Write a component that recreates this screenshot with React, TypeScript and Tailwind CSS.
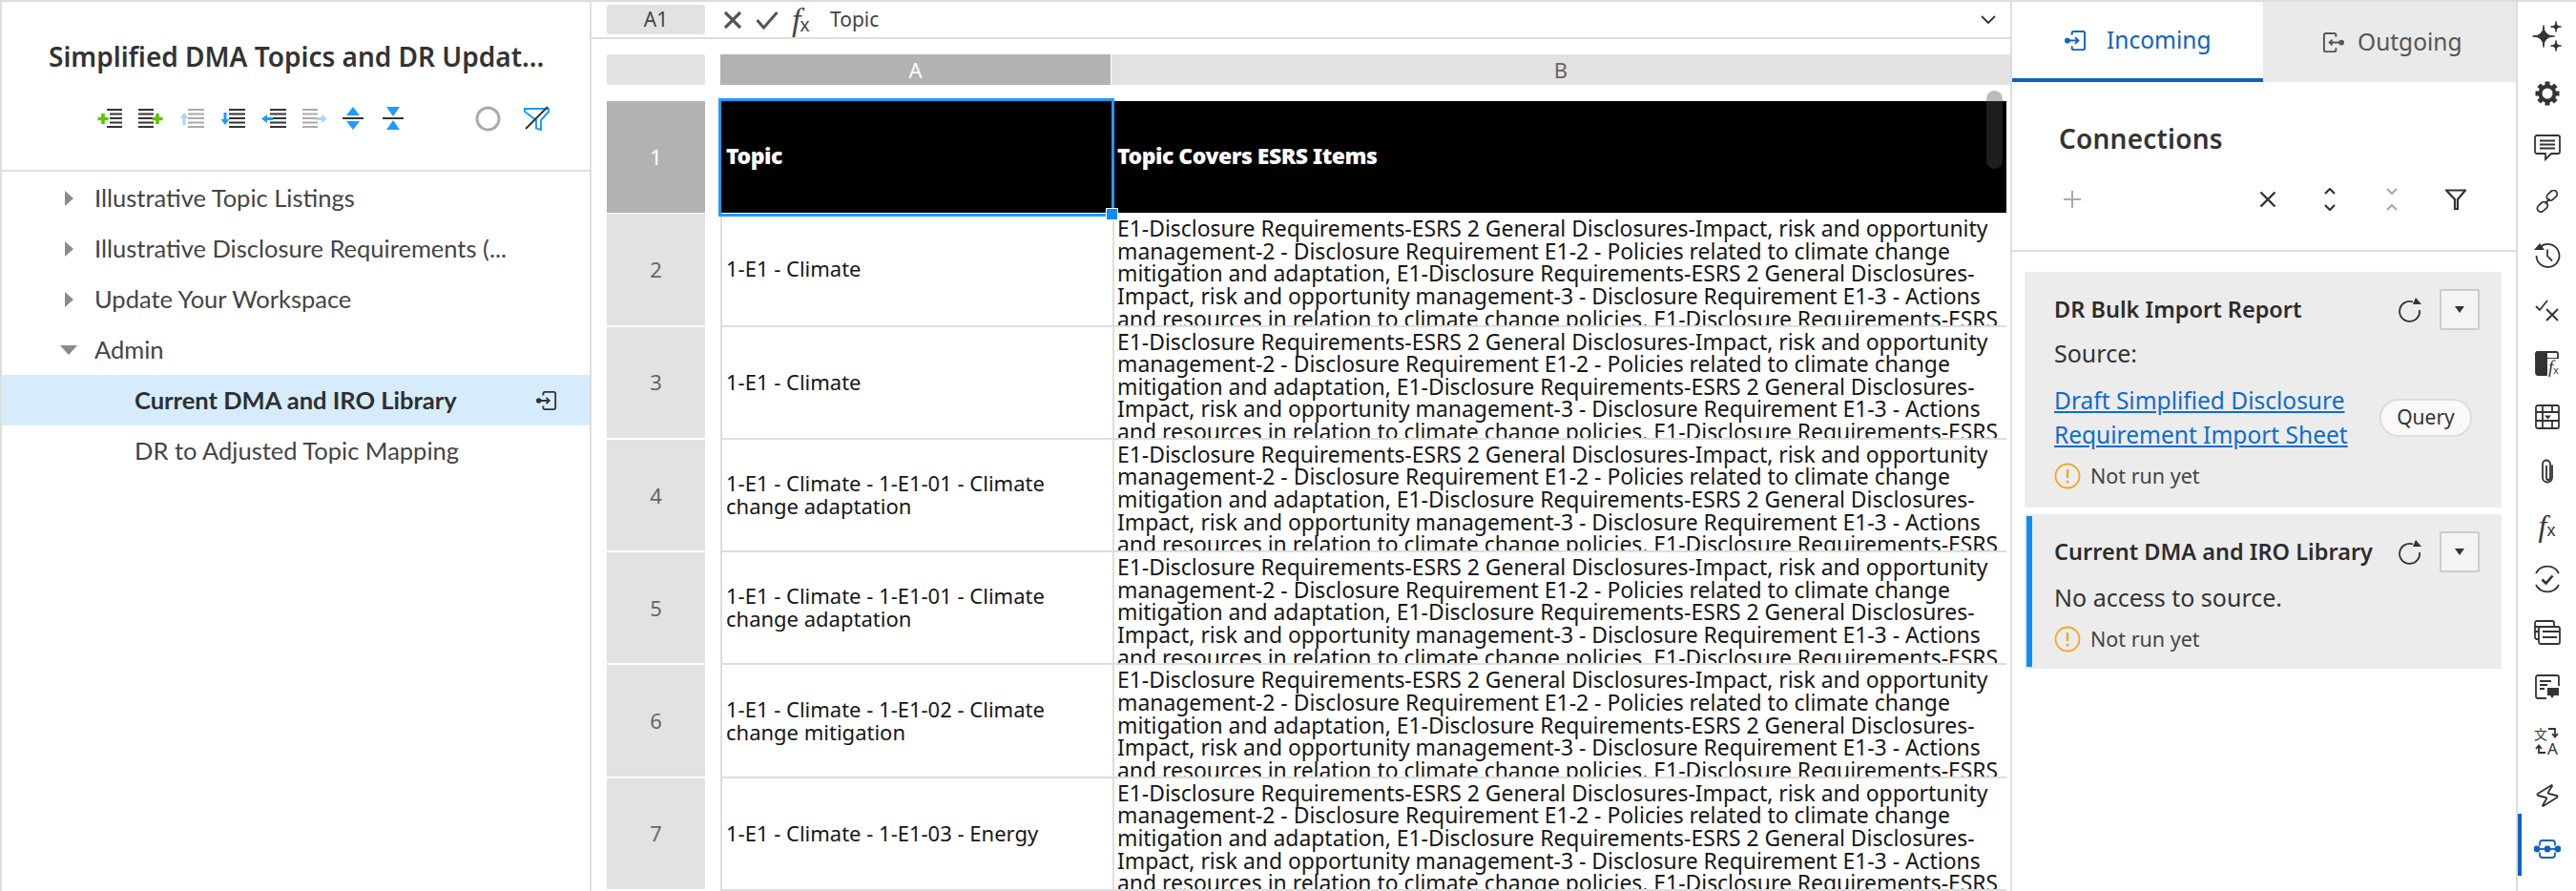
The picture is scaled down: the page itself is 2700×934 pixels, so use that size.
import React from "react";
import { Zap } from "lucide-react";

const PLEX = "font-['Noto_Sans',sans-serif]";

const longLines = [
  "E1-Disclosure Requirements-ESRS 2 General Disclosures-Impact, risk and opportunity",
  "management-2 - Disclosure Requirement E1-2 - Policies related to climate change",
  "mitigation and adaptation, E1-Disclosure Requirements-ESRS 2 General Disclosures-",
  "Impact, risk and opportunity management-3 - Disclosure Requirement E1-3 - Actions",
  "and resources in relation to climate change policies, E1-Disclosure Requirements-ESRS",
];

const rows = [
  { n: 2, a: ["1-E1 - Climate"] },
  { n: 3, a: ["1-E1 - Climate"] },
  { n: 4, a: ["1-E1 - Climate - 1-E1-01 - Climate", "change adaptation"] },
  { n: 5, a: ["1-E1 - Climate - 1-E1-01 - Climate", "change adaptation"] },
  { n: 6, a: ["1-E1 - Climate - 1-E1-02 - Climate", "change mitigation"] },
  { n: 7, a: ["1-E1 - Climate - 1-E1-03 - Energy"] },
];

const BLUE = "#1e9bff";
const GREEN = "#5cc400";

function Lines({ color, x, w, short = 0 }: { color: string; x: number; w: number; short?: number }) {
  return (
    <g fill={color}>
      {[1, 5.5, 10, 14.5, 19].map((y, i) => (
        <rect key={y} x={i === 0 || i === 4 ? x : x + short} y={y - 1} width={i === 0 || i === 4 ? w : w - short} height={2} />
      ))}
    </g>
  );
}

function Plus({ cx, cy }: { cx: number; cy: number }) {
  return <path d={`M${cx - 5.5} ${cy}H${cx + 5.5}M${cx} ${cy - 5.5}V${cy + 5.5}`} stroke={GREEN} strokeWidth="3.6" fill="none" />;
}

function ToolIcon({ children }: { children: React.ReactNode }) {
  return (
    <svg width="27" height="21" viewBox="0 0 27 21" className="shrink-0">
      {children}
    </svg>
  );
}

function TreeToolbar() {
  return (
    <div className="flex items-center ml-[100px] mt-[33px] h-[26px]">
      <div className="flex gap-[16px] items-center">
        <ToolIcon><Lines color="#333" x={10} w={16} short={3} /><Plus cx={6} cy={10.5} /></ToolIcon>
        <ToolIcon><Lines color="#333" x={0} w={16} /><Plus cx={20} cy={10.5} /></ToolIcon>
        <ToolIcon><Lines color="#aaa" x={9} w={17} /><path d="M5 4l4.5 6H6.5v7h-3v-7H.5z" fill="#a8d4fb" /></ToolIcon>
        <ToolIcon><Lines color="#333" x={9} w={17} /><path d="M5 17l4.5-6H6.5V4h-3v7H.5z" fill={BLUE} /></ToolIcon>
        <ToolIcon><Lines color="#333" x={9} w={17} /><path d="M0 10.5l6-4.5v3h6v3H6v3z" fill={BLUE} /></ToolIcon>
        <ToolIcon><Lines color="#aaa" x={0} w={16} /><path d="M26 10.5l-6-4.5v3h-6v3h6v3z" fill="#a8d4fb" /></ToolIcon>
      </div>
      <div className="flex gap-[20px] ml-[15px] items-center">
        <svg width="22" height="24" viewBox="0 0 22 24"><path d="M11 0l7 9H4zM11 24l-7-9h14z" fill={BLUE} /><rect y="11" width="22" height="2" fill="#333" /></svg>
        <svg width="22" height="24" viewBox="0 0 22 24"><path d="M11 10L4 0h14zM11 14l7 10H4z" fill={BLUE} /><rect y="11" width="22" height="2" fill="#333" /></svg>
      </div>
      <svg width="27" height="27" viewBox="0 0 27 27" className="ml-[75px]"><circle cx="13.5" cy="13.5" r="11.5" fill="none" stroke="#aaa" strokeWidth="3" /></svg>
      <svg width="27" height="27" viewBox="0 0 27 27" className="ml-[24px]">
        <path d="M1 3h25v3l-8 9v10l-5-1.5V15L1 6z" fill="none" stroke={BLUE} strokeWidth="2" />
        <path d="M2 24L25 1" stroke="#333" strokeWidth="2" />
      </svg>
    </div>
  );
}

function Caret({ open }: { open?: boolean }) {
  return (
    <svg width="20" height="20" viewBox="0 0 20 20" className="shrink-0">
      {open ? <path d="M1 5h18l-9 10z" fill="#8a8a8a" /> : <path d="M6 2l9 8-9 8z" fill="#8a8a8a" />}
    </svg>
  );
}

function InIcon({ size = 22, color = "#333" }: { size?: number; color?: string }) {
  return (
    <svg width={size} height={size} viewBox="0 0 24 24" fill="none" stroke={color} strokeWidth="2">
      <path d="M8 6V4a2 2 0 0 1 2-2h10a2 2 0 0 1 2 2v16a2 2 0 0 1-2 2H10a2 2 0 0 1-2-2v-2" />
      <path d="M2 12h13M11.5 8.5L15 12l-3.5 3.5" />
      <circle cx="3" cy="12" r="2" fill={color} />
    </svg>
  );
}

function OutIcon({ size = 22, color = "#555" }: { size?: number; color?: string }) {
  return (
    <svg width={size} height={size} viewBox="0 0 24 24" fill="none" stroke={color} strokeWidth="2">
      <path d="M15 6V4a2 2 0 0 0-2-2H4a2 2 0 0 0-2 2v16a2 2 0 0 0 2 2h9a2 2 0 0 0 2-2v-2" />
      <path d="M9 12h13M11 9l-3 3 3 3" />
      <circle cx="21" cy="12" r="2" fill={color} />
    </svg>
  );
}

function TreeRow({ label, open, child, selected }: { label: string; open?: boolean; child?: boolean; selected?: boolean }) {
  return (
    <div className={`flex items-center h-[53px] text-[25.5px] font-['Lato',sans-serif] ${selected ? "bg-[#d6ecfd] font-bold text-[#2f2f2f]" : "text-[#444]"}`}>
      {child ? <span className="w-[139px] shrink-0" /> : (
        <span className="w-[97px] shrink-0 flex pl-[60px]"><Caret open={open} /></span>
      )}
      <span className="truncate">{label}</span>
      {selected && <span className="ml-auto mr-[34px] flex"><InIcon size={22} color="#333" /></span>}
    </div>
  );
}

function LeftPanel() {
  return (
    <aside className="w-[620px] shrink-0 border-l-2 border-r-2 border-[#ddd]">
      <div className="h-[178px] border-b-2 border-[#ddd]">
        <h1 className={`${PLEX} pl-[49px] pt-[38px] text-[28px] leading-[38px] font-semibold text-[#333] whitespace-nowrap`}>
          Simplified DMA Topics and DR Updat...
        </h1>
        <TreeToolbar />
      </div>
      <div className="pt-[1px]">
        <TreeRow label="Illustrative Topic Listings" />
        <TreeRow label="Illustrative Disclosure Requirements (..." />
        <TreeRow label="Update Your Workspace" />
        <TreeRow label="Admin" open />
        <TreeRow label="Current DMA and IRO Library" child selected />
        <TreeRow label="DR to Adjusted Topic Mapping" child />
      </div>
    </aside>
  );
}

function Fx({ className = "" }: { className?: string }) {
  return (
    <span className={`flex items-end leading-none text-[#444] ${className}`}>
      <span className="font-['Liberation_Serif',serif] italic text-[34px] leading-[28px]">f</span>
      <span className="font-['Liberation_Sans',sans-serif] text-[20px] leading-[18px] -ml-[1px]">x</span>
    </span>
  );
}

function FormulaBar() {
  return (
    <div className={`${PLEX} h-[39px] border-b-2 border-[#ddd] flex items-center pl-[16px] pr-[15px] shrink-0`}>
      <div className="w-[103px] h-[31px] rounded-[3px] bg-[#e2e2e2] flex items-center justify-center text-[21px] text-[#444]">A1</div>
      <svg width="20" height="20" viewBox="0 0 20 20" className="ml-[19px]"><path d="M2 2l16 16M18 2L2 18" stroke="#555" strokeWidth="3.2" fill="none" /></svg>
      <svg width="24" height="20" viewBox="0 0 24 20" className="ml-[14px]"><path d="M1.5 10l7 8L22.5 2" stroke="#555" strokeWidth="3" fill="none" /></svg>
      <Fx className="ml-[14px] w-[25px]" />
      <span className="ml-[15px] text-[21px] text-[#444]">Topic</span>
      <svg width="16" height="10" viewBox="0 0 16 10" className="ml-auto"><path d="M1 1l7 7 7-7" stroke="#333" strokeWidth="1.8" fill="none" /></svg>
    </div>
  );
}

function Sheet() {
  return (
    <div className={`${PLEX} relative flex-1 overflow-hidden pt-[16px]`}>
      <div className="flex h-[32px] pl-[16px] text-[22px]">
        <div className="w-[103px] bg-[#e2e2e2] rounded-[2px]" />
        <div className="ml-[16px] w-[409px] bg-[#b2b2b2] text-white flex items-center justify-center">A</div>
        <div className="ml-[1px] flex-1 bg-[#e2e2e2] text-[#666] flex items-center justify-center">B</div>
      </div>
      <div className="mt-[17px] pl-[16px]">
        <div className="flex h-[118.3px]">
          <div className="w-[103px] mb-[1.5px] bg-[#b2b2b2] text-white text-[22px] flex items-center justify-center">1</div>
          <div className="ml-[16px] w-[411px] bg-black mb-[1.5px] text-white font-black text-[23px] flex items-center pl-[6px] pb-[3px] tracking-[-0.5px]">Topic</div>
          <div className="w-[937px] bg-black mb-[1.5px] text-white font-black text-[23px] flex items-center pl-[5px] pb-[3px] tracking-[-0.5px]">Topic Covers ESRS Items</div>
        </div>
        {rows.map((r) => (
          <div key={r.n} className="flex h-[118.3px]">
            <div className="w-[103px] mb-[2px] bg-[#e2e2e2] text-[#666] text-[22px] flex items-center justify-center">{r.n}</div>
            <div className="ml-[16px] w-[411px] border-l-2 border-b-2 border-[#ddd] flex flex-col justify-center pl-[4px] text-[22px] leading-[24px] text-[#161616] pb-[2px]">
              {r.a.map((t) => <div key={t} className="whitespace-nowrap">{t}</div>)}
            </div>
            <div className="w-[937px] border-l-2 border-b-2 border-[#ddd] pl-[3px] pt-[4px] overflow-hidden text-[22.9px] leading-[23.6px] text-[#161616]">
              {longLines.map((t) => <div key={t} className="whitespace-nowrap">{t}</div>)}
            </div>
          </div>
        ))}
      </div>
      {/* selected cell */}
      <div className="absolute left-[133px] top-[62px] w-[415px] h-[124px] border-[3px] border-[#1e9bff]" />
      <div className="absolute left-[539px] top-[177px] w-[13px] h-[13px] bg-[#0a8cff] border border-white" />
      {/* scroll thumb */}
      <div className="absolute left-[1462px] top-[54px] w-[17px] h-[82px] rounded-full bg-[rgba(78,78,78,0.385)]" />
    </div>
  );
}

function Refresh() {
  return (
    <svg width="26" height="26" viewBox="0 0 26 26" className="shrink-0" fill="none">
      <path d="M16 4.5A10.5 10.5 0 1 0 23 13" stroke="#333" strokeWidth="1.8" />
      <path d="M19 0l6 7h-9z" fill="#333" />
    </svg>
  );
}

function DropBtn() {
  return (
    <div className="w-[42px] h-[43px] shrink-0 ml-[18px] bg-[#f4f4f4] border-2 border-[#ccc] rounded-[2px] flex items-center justify-center">
      <svg width="12" height="7" viewBox="0 0 12 7"><path d="M1 0h10L6 7z" fill="#333" /></svg>
    </div>
  );
}

function Warn() {
  return (
    <svg width="28" height="28" viewBox="0 0 28 28" className="shrink-0" fill="none">
      <circle cx="14" cy="14" r="12.5" stroke="#f5a623" strokeWidth="1.8" />
      <path d="M14 7v9" stroke="#f5a623" strokeWidth="2.4" />
      <circle cx="14" cy="20" r="1.5" fill="#f5a623" />
    </svg>
  );
}

function NotRun({ className = "" }: { className?: string }) {
  return (
    <div className={`flex items-center gap-[10px] text-[21.5px] text-[#444] ${className}`}>
      <Warn />
      <span>Not run yet</span>
    </div>
  );
}

function ConnectionsPanel() {
  return (
    <section className={`${PLEX} w-[530px] shrink-0 border-l-2 border-[#ddd]`}>
      <div className="flex h-[84px] text-[24.5px]">
        <div className="w-[263px] border-b-[4px] border-[#0f62c0] text-[#0f62c0] flex items-center pl-[55px] gap-[21px]">
          <InIcon size={23} color="#0f62c0" />
          <span>Incoming</span>
        </div>
        <div className="flex-1 bg-[#e9ebeb] text-[#555] flex items-center pl-[62px] gap-[14px]">
          <OutIcon size={23} />
          <span>Outgoing</span>
        </div>
      </div>
      <div className="h-[178px] border-b-2 border-[#ddd]">
        <h2 className="pl-[49px] pt-[40px] text-[28px] leading-[38px] font-semibold text-[#333] tracking-[0.2px]">Connections</h2>
        <div className="flex items-center h-[28px] mt-[31px] pl-[53px]">
          <svg width="20" height="20" viewBox="0 0 20 20"><path d="M10 1v18M1 10h18" stroke="#aaa" strokeWidth="2" /></svg>
          <svg width="18" height="18" viewBox="0 0 18 18" className="ml-[186px]"><path d="M1.5 1.5l15 15M16.500 1.5l-15 15" stroke="#333" strokeWidth="2.4" /></svg>
          <svg width="12" height="24" viewBox="0 0 12 24" className="ml-[50px]" fill="none" stroke="#333" strokeWidth="2.2"><path d="M1 6l5-5 5 5M1 18l5 5 5-5" /></svg>
          <svg width="12" height="24" viewBox="0 0 12 24" className="ml-[53px]" fill="none" stroke="#aaa" strokeWidth="2.2"><path d="M1 1l5 5 5-5M1 23l5-5 5 5" /></svg>
          <svg width="22" height="22" viewBox="0 0 22 22" className="ml-[50px]" fill="none" stroke="#333" strokeWidth="2.2"><path d="M1 1.5h20L13 11v10h-3V11z" /></svg>
        </div>
      </div>
      <div className="mt-[21px] ml-[13px] w-[500px] h-[247px] bg-[#ececec] pl-[31px] pr-[23px] pt-[18px]">
        <div className="flex items-center h-[43px]">
          <span className="flex-1 text-[23.5px] font-semibold text-[#2c2c2c] whitespace-nowrap">DR Bulk Import Report</span>
          <Refresh />
          <DropBtn />
        </div>
        <div className="text-[25px] leading-[30px] mt-[9px] text-[#333]">Source:</div>
        <div className="flex items-center mt-[17px]">
          <a className="flex-1 text-[24.5px] leading-[36px] text-[#0f6bcf] underline">Draft Simplified Disclosure<br />Requirement Import Sheet</a>
          <div className="w-[97px] h-[40px] mr-[8px] rounded-full bg-[#f9f9f9] border-2 border-[#ddd] flex items-center justify-center text-[21px] text-[#333]">Query</div>
        </div>
        <NotRun className="mt-[9px]" />
      </div>
      <div className="mt-[7px] ml-[13px] w-[500px] h-[162px] bg-[#ececec] pl-[2px] py-[2px] flex">
        <div className="w-[6px] bg-[#0f8cf5] shrink-0" />
        <div className="flex-1 pl-[23px] pr-[23px] pt-[16px]">
          <div className="flex items-center h-[43px]">
            <span className="w-[337px] overflow-hidden whitespace-nowrap text-[23.5px] font-semibold text-[#2c2c2c]">Current DMA and IRO Library</span>
            <span className="ml-auto flex items-center"><Refresh /><DropBtn /></span>
          </div>
          <div className="text-[25px] leading-[30px] mt-[11px] text-[#333]">No access to source.</div>
          <NotRun className="mt-[13px]" />
        </div>
      </div>
    </section>
  );
}

const stroke = { fill: "none", stroke: "#333", strokeWidth: 1.8 };

function star(x: number, y: number, r: number) {
  return `M${x} ${y - r}Q${x} ${y} ${x + r} ${y}Q${x} ${y} ${x} ${y + r}Q${x} ${y} ${x - r} ${y}Q${x} ${y} ${x} ${y - r}Z`;
}

const railIcons: React.ReactNode[] = [
  <svg width="32" height="32" viewBox="0 0 32 32" className="-translate-y-[3px]"><path d={star(12, 16, 11.5)} fill="#333" stroke="#333" /><path d={star(25, 6, 5.5)} fill="#333" stroke="#333" /><path d={star(25, 26, 5.5)} fill="#333" stroke="#333" /></svg>,
  <svg width="28" height="28" viewBox="0 0 28 28">
    {[0, 45, 90, 135, 180, 225, 270, 315].map((a) => <rect key={a} x="11.5" y="1.5" width="5" height="6" fill="#333" transform={`rotate(${a} 14 14)`} />)}
    <circle cx="14" cy="14" r="7.5" fill="none" stroke="#333" strokeWidth="4" />
  </svg>,
  <svg width="30" height="30" viewBox="0 0 30 30" {...stroke}><path d="M4 3h22a2 2 0 0 1 2 2v15a2 2 0 0 1-2 2h-7l-6 6v-6H4a2 2 0 0 1-2-2V5a2 2 0 0 1 2-2z" /><path d="M7 8.5h16M7 12.5h16M7 16.5h16" /></svg>,
  <svg width="24" height="24" viewBox="0 0 24 24" {...stroke}><rect x="11" y="2" width="12" height="7.5" rx="3.7" transform="rotate(-42 17 6)" /><rect x="1" y="14" width="12" height="7.5" rx="3.7" transform="rotate(-42 7 18)" /><path d="M9.5 14.5l5-5" /></svg>,
  <svg width="28" height="28" viewBox="0 0 28 28" {...stroke}><path d="M6.5 5A12 12 0 1 1 2.5 14" /><path d="M14 7.5V14.5l5 5" /><path d="M0 8l6-7 5 7z" fill="#333" stroke="none" /></svg>,
  <svg width="26" height="26" viewBox="0 0 26 26" {...stroke}><path d="M1 10l4 4L13 4" /><path d="M12 13l12 12M24 13L12 25" strokeWidth="2" /></svg>,
  <span className="relative flex w-[25px] h-[26px]">
    <svg width="25" height="26" viewBox="0 0 25 26" {...stroke}><path d="M3 1h19a2 2 0 0 1 2 2v5H1V3a2 2 0 0 1 2-2z" /><path d="M12 1v24" /><path d="M3 1h9v24H3a2 2 0 0 1-2-2V3a2 2 0 0 1 2-2z" fill="#333" /></svg>
    <span className="absolute left-[13px] top-[8px] flex items-end font-['Liberation_Serif',serif] italic text-[19px] leading-[18px] text-[#333] bg-white pl-[1px]">f<span className="font-['Liberation_Sans',sans-serif] not-italic text-[11px] leading-[12px]">x</span></span>
  </span>,
  <svg width="26" height="26" viewBox="0 0 26 26" {...stroke}><rect x="1" y="1" width="24" height="24" rx="2" /><path d="M1 8h24M1 17h24M8 1v24M18 1v7M18 17v8" /><path d="M10 11.5h7l-3.5 4z" fill="#333" stroke="none" /></svg>,
  <svg width="28" height="28" viewBox="0 0 28 28" {...stroke}><path d="M19 7.5v13a5 5 0 0 1-10 0V6.5a4 4 0 0 1 8 0V21a2 2 0 0 1-4 0V8" /></svg>,
  <span className="flex items-end text-[#333]"><span className="font-['Liberation_Serif',serif] italic text-[32px] leading-[28px]">f</span><span className="font-['Liberation_Sans',sans-serif] text-[18px] leading-[17px]">x</span></span>,
  <svg width="30" height="30" viewBox="0 0 30 30" {...stroke}><path d="M3 9A13.5 13.5 0 0 1 27 9M27 21A13.5 13.5 0 0 1 3 21" /><path d="M9.5 15.5l4 4 7-8" strokeWidth="2.6" /></svg>,
  <svg width="30" height="28" viewBox="0 0 30 28" {...stroke}><path d="M6 20H4a2 2 0 0 1-2-2V3a2 2 0 0 1 2-2h16a2 2 0 0 1 2 2v3" /><rect x="6" y="7" width="22" height="18" rx="2" fill="#fff" /><path d="M2 7h14M2 12h4M10 12h18M10 18h15" /></svg>,
  <svg width="26" height="26" viewBox="0 0 26 26" {...stroke}><path d="M12 25H3a2 2 0 0 1-2-2V3a2 2 0 0 1 2-2h20a2 2 0 0 1 2 2v9" /><path d="M5 7h12M5 11h8M5 15h5" /><path d="M13 14h12v8h-5l-2 3-2-3h-3z" fill="#333" stroke="none" /></svg>,
  <svg width="28" height="30" viewBox="0 0 28 30">
    <text x="0" y="13" fontSize="14" fill="#333" fontFamily="'Noto Sans CJK SC',sans-serif">文</text>
    <text x="14" y="29" fontSize="17" fill="#333" fontFamily="'Noto Sans',sans-serif">A</text>
    <path d="M15 2h7v8M19 7l3 3.5 3-3.5" fill="none" stroke="#333" strokeWidth="1.8" />
    <path d="M12 27H5v-7M2 23l3-3.5 3 3.5" fill="none" stroke="#333" strokeWidth="1.8" />
  </svg>,
  <Zap size={28} strokeWidth={1.6} color="#333" className="rotate-[14deg]" />,
  <svg width="28" height="20" viewBox="0 0 28 20" fill="none" stroke="#0f62c0" strokeWidth="1.8"><path d="M2 10h24" /><path d="M6 6.5V4a3 3 0 0 1 3-3h10a3 3 0 0 1 3 3v2.5M6 13.5V16a3 3 0 0 0 3 3h10a3 3 0 0 0 3-3v-2.5" /><circle cx="3" cy="10" r="2.5" fill="#0f62c0" /><circle cx="14" cy="10" r="2.5" fill="#0f62c0" /><circle cx="25" cy="10" r="2.5" fill="#0f62c0" /></svg>,
];

function Rail() {
  return (
    <nav className="w-[63px] shrink-0 border-l-2 border-[#ddd] pt-[11px] relative">
      {railIcons.map((icon, i) => (
        <div key={i} className="h-[56.6px] flex items-center justify-center">{icon}</div>
      ))}
      <div className="absolute left-0 top-[851px] w-[4px] h-[65px] bg-[#0f62c0]" />
    </nav>
  );
}

export default function App() {
  return (
    <div className="w-[2700px] h-[934px] overflow-hidden bg-white border-t-2 border-[#ddd] flex">
      <LeftPanel />
      <main className="w-[1487px] shrink-0 flex flex-col">
        <FormulaBar />
        <Sheet />
      </main>
      <ConnectionsPanel />
      <Rail />
    </div>
  );
}
